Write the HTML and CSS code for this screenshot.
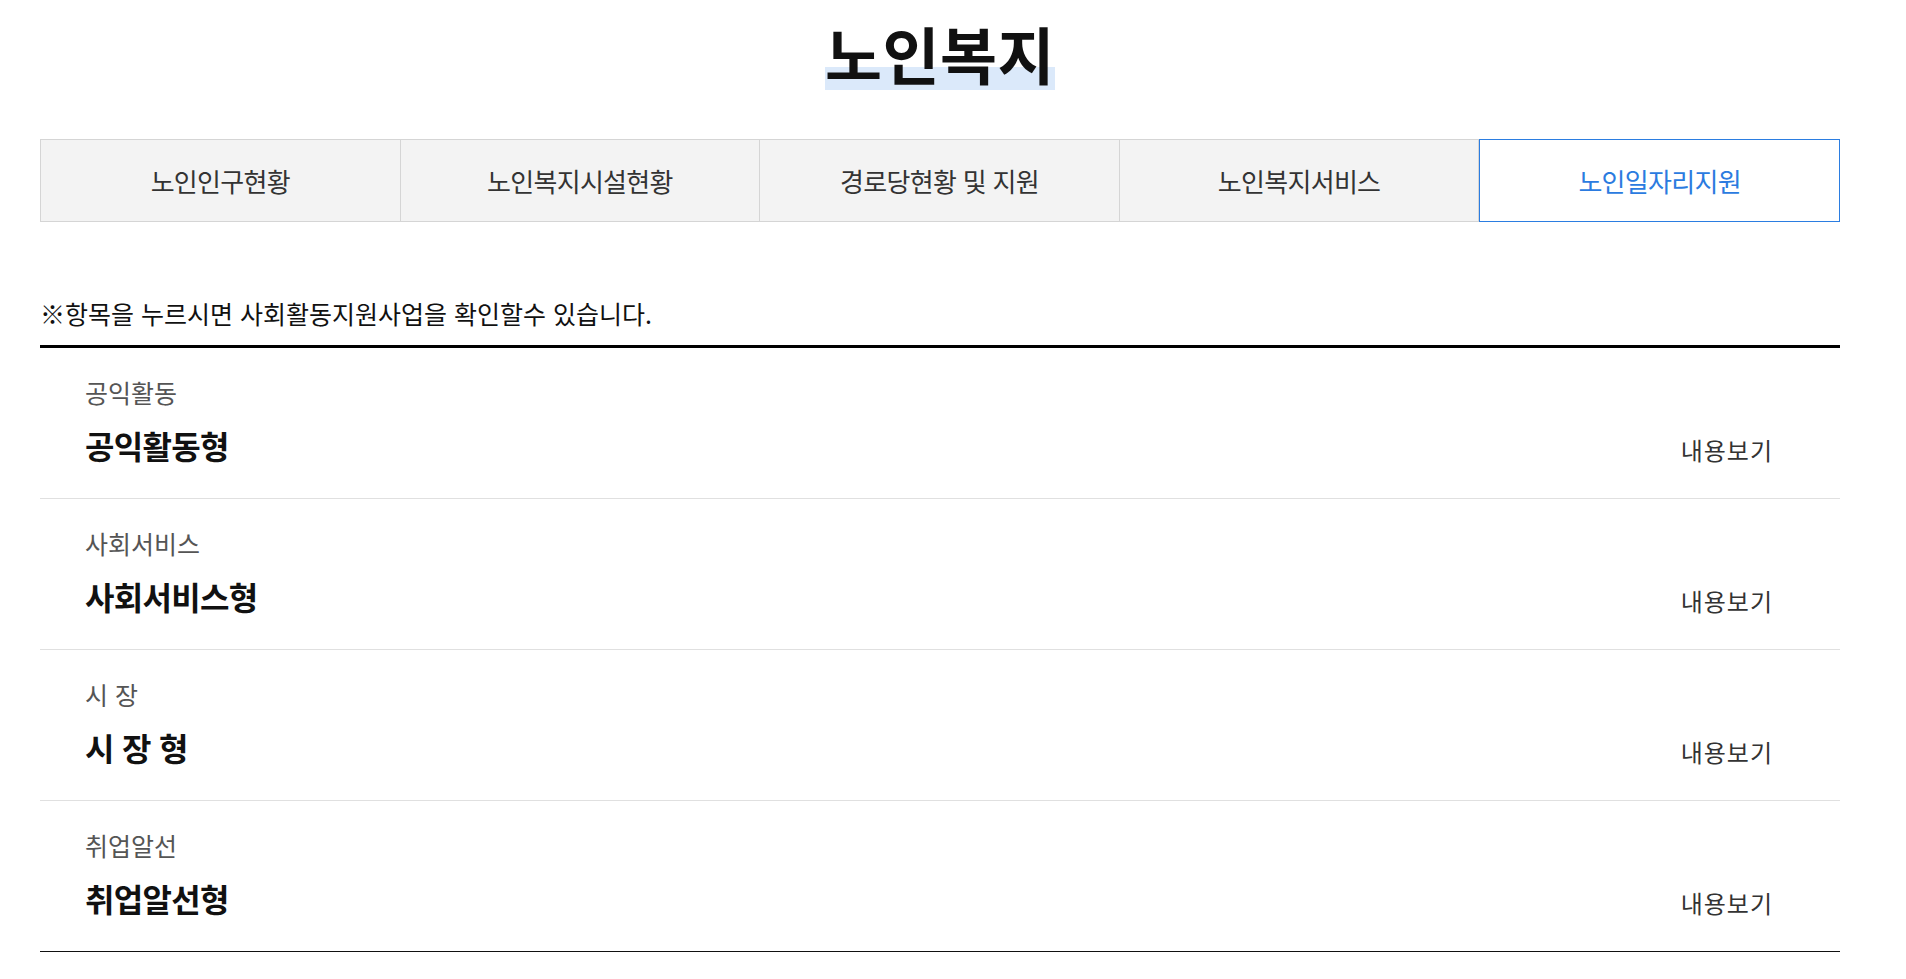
FILE: index.html
```html
<!DOCTYPE html>
<html lang="ko">
<head>
<meta charset="utf-8">
<title>노인복지</title>
<link rel="stylesheet" href="styles.css">
</head>
<body>
<div class="wrap">
  <h1 class="title"><span class="hl">노인복지</span></h1>
  <ul class="tabs">
    <li class="tab">노인인구현황</li>
    <li class="tab">노인복지시설현황</li>
    <li class="tab">경로당현황 및 지원</li>
    <li class="tab">노인복지서비스</li>
    <li class="tab on">노인일자리지원</li>
  </ul>
  <p class="note">※항목을 누르시면 사회활동지원사업을 확인할수 있습니다.</p>
  <ul class="list">
    <li class="row">
      <div class="txt"><p class="cat">공익활동</p><p class="name">공익활동형</p></div>
      <span class="more">내용보기</span>
    </li>
    <li class="row">
      <div class="txt"><p class="cat">사회서비스</p><p class="name">사회서비스형</p></div>
      <span class="more">내용보기</span>
    </li>
    <li class="row">
      <div class="txt"><p class="cat">시 장</p><p class="name">시 장 형</p></div>
      <span class="more">내용보기</span>
    </li>
    <li class="row">
      <div class="txt"><p class="cat">취업알선</p><p class="name">취업알선형</p></div>
      <span class="more">내용보기</span>
    </li>
  </ul>
</div>
</body>
</html>
```

FILE: styles.css
```css
html, body {
  margin: 0;
  padding: 0;
  background: #fff;
}
body {
  font-family: "Noto Sans CJK KR", "Noto Sans", sans-serif;
  color: #111;
}
.wrap {
  width: 1800px;
  margin-left: 40px;
}
.title {
  margin: 0;
  padding-top: 19px;
  text-align: center;
  font-size: 62px;
  font-weight: 700;
  letter-spacing: 0.5px;
  line-height: 68px;
  color: #111;
}
.hl {
  display: inline-block;
  padding: 0 0 3px 0;
  background: linear-gradient(to bottom, transparent 0, transparent calc(100% - 23px), #dbe9fa calc(100% - 23px), #dbe9fa 100%);
}
.tabs {
  list-style: none;
  margin: 49px 0 0;
  padding: 0;
  display: flex;
}
.tab {
  flex: 1;
  height: 81px;
  display: flex;
  align-items: center;
  justify-content: center;
  background: #f3f3f3;
  border: 1px solid #d5d5d5;
  border-left: 0;
  font-size: 26px;
  letter-spacing: -0.7px;
  color: #333;
}
.tab:first-child {
  border-left: 1px solid #d5d5d5;
}
.tab.on {
  background: #fff;
  border: 1px solid #2b7de1;
  color: #2b7be0;
}
.note {
  margin: 74px 0 15px;
  font-size: 25px;
  line-height: 34px;
  letter-spacing: 0;
  color: #111;
}
.list {
  list-style: none;
  margin: 0;
  padding: 0;
  border-top: 3px solid #000;
}
.row {
  display: flex;
  justify-content: space-between;
  align-items: flex-end;
  padding: 29px 67px 33px 45px;
  border-bottom: 1px solid #e0e0e0;
}
.row:last-child {
  border-bottom: 1px solid #111;
}
.cat {
  margin: 0;
  font-size: 25px;
  line-height: 30px;
  letter-spacing: 0;
  color: #555;
}
.name {
  margin: 18px 0 0;
  font-size: 32px;
  line-height: 40px;
  font-weight: 700;
  letter-spacing: -0.7px;
  color: #111;
}
.more {
  font-size: 24px;
  line-height: 30px;
  letter-spacing: 1px;
  color: #333;
}
```
